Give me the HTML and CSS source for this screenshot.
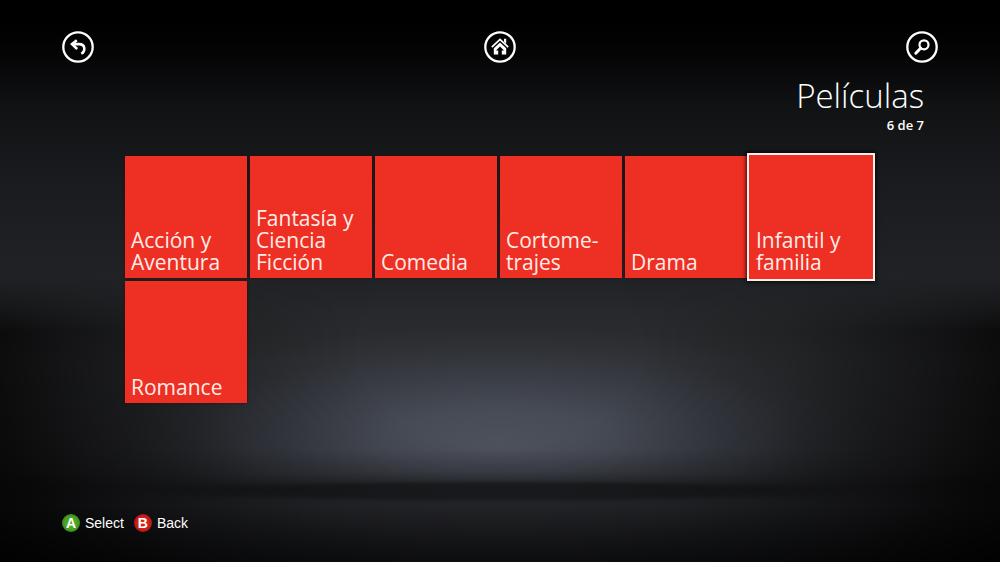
FILE: index.html
```html
<!DOCTYPE html>
<html lang="es">
<head>
<meta charset="utf-8">
<meta name="viewport" content="width=device-width, initial-scale=1">
<title>Películas</title>
<link rel="stylesheet" href="styles.css">
</head>
<body class="screen">
  <nav class="topbar">
    <button class="round" type="button" aria-label="Volver">
      <svg viewBox="0 0 32 32"><circle class="ring" cx="16" cy="16" r="14.7"/><path class="line" d="M14.8 9.3 10 13.1 15.2 18M10.6 13.1H17C23.8 13.1 23.5 20.5 19.3 22.6"/></svg>
    </button>
    <button class="round" type="button" aria-label="Inicio">
      <svg viewBox="0 0 32 32"><circle class="ring" cx="16" cy="16" r="14.7"/><path class="roof" d="M7.8 16.2 16 8.4l8.2 7.8"/><path class="fill" d="M20 7.8h2.2v5L20 10.7zM16 11.4l6.2 5.9v6.1h-4.4v-3.8h2.2L16 15.6l-4 4h2.2v3.8H9.8v-6.1z"/></svg>
    </button>
    <button class="round" type="button" aria-label="Buscar">
      <svg viewBox="0 0 32 32"><circle class="ring" cx="16" cy="16" r="14.7"/><circle class="lens" cx="18" cy="13.8" r="4.5"/><path class="handle" d="m14.6 17.2-4.8 5"/></svg>
    </button>
  </nav>
  <header class="heading">
    <h1 class="title">Películas</h1>
    <p class="count">6 de 7</p>
  </header>
  <main class="tiles">
    <button class="tile" type="button">Acción y Aventura</button>
    <button class="tile" type="button">Fantasía y Ciencia Ficción</button>
    <button class="tile" type="button">Comedia</button>
    <button class="tile" type="button">Cortome-trajes</button>
    <button class="tile" type="button">Drama</button>
    <button class="tile selected" type="button">Infantil y familia</button>
    <button class="tile" type="button">Romance</button>
  </main>
  <footer class="hints">
    <button class="hint" type="button"><span class="key green">A</span>Select</button>
    <button class="hint" type="button"><span class="key red">B</span>Back</button>
  </footer>
</body>
</html>
```

FILE: styles.css
```css
* { box-sizing: border-box; }

.screen {
  position: relative;
  isolation: isolate;
  display: flex;
  flex-direction: column;
  min-height: 100vh;
  margin: 0;
  color: #fff;
  background: #000;
  font-family: "Open Sans", "Noto Sans", sans-serif;
}

/* Back wall, floor and the light pooled between them */
.screen::before,
.screen::after {
  content: "";
  position: absolute;
  inset: 0;
  z-index: -2;
}

.screen::before {
  background:
    radial-gradient(ellipse 38% 2% at 50% 87.4%, rgba(24, 25, 28, .8) 20%, rgba(20, 21, 23, .6) 60%, transparent),
    linear-gradient(transparent 80%, rgba(32, 33, 36, .35) 84%, rgba(32, 33, 36, .9) 86.5%, rgba(38, 39, 43, .95) 90%, #111214 100%),
    radial-gradient(ellipse 38% 21% at 50% 79%, #4d515c, #474b55 30%, rgba(58, 62, 71, .85) 60%, rgba(51, 54, 61, .45) 82%, transparent),
    linear-gradient(#000 4%, #050506 10%, #111214 19%, #191b1e 32%, #202226 49%, #28292c 56%, #2d2e31 64%, #2b2c2f 100%);
}

.screen::after {
  z-index: -1;
  background: radial-gradient(ellipse 58% 72% at 50% 62%, transparent 25%, rgba(0, 0, 0, .2) 50%, rgba(0, 0, 0, .5) 72%, rgba(0, 0, 0, .75) 88%, #000 112%);
  mask-image: linear-gradient(transparent 49%, #000 59%);
}

button {
  margin: 0;
  padding: 0;
  border: 0;
  color: inherit;
  background: none;
  font: inherit;
  cursor: pointer;
}

.topbar {
  display: flex;
  justify-content: space-between;
  padding: 31px 62px 0;
}

.round { width: 32px; height: 32px; }
.round svg { display: block; fill: none; stroke: #fff; }
.ring { stroke-width: 2.3; }
.line { stroke-width: 2.6; }
.roof { stroke-width: 1.8; }
.fill { fill: #fff; stroke: none; }
.lens { stroke-width: 2.2; }
.handle { stroke-width: 3; stroke-linecap: round; }

.heading {
  padding: 11px 76px 0;
  text-align: right;
}

.title {
  margin: 0;
  font-size: 33px;
  font-weight: 300;
  line-height: 44px;
}

.count {
  margin: 0;
  font-size: 13px;
  font-weight: 600;
  line-height: 14px;
}

.tiles {
  display: grid;
  grid-template-columns: repeat(6, 1fr);
  gap: 3px;
  padding: 24px 128px 0 125px;
}

.tile {
  display: flex;
  flex-direction: column;
  justify-content: flex-end;
  aspect-ratio: 1;
  padding: 5px 6px;
  color: #ffece8;
  background: #ee3024;
  box-shadow: 0 0 2px #3a0c0b;
  font-size: 21px;
  line-height: 22px;
  text-align: left;
}

.selected {
  z-index: 1;
  margin: -3px;
  padding: 6px 7px;
  border: 2px solid #fff0ec;
  box-shadow: 0 0 4px 1px rgba(0, 0, 0, .8);
}

.hints {
  display: flex;
  gap: 10px;
  margin-top: auto;
  padding: 24px 62px 30px;
}

.hint {
  display: flex;
  align-items: center;
  gap: 5px;
  font-family: "Liberation Sans", Arial, sans-serif;
  font-size: 14px;
  line-height: 18px;
}

.key {
  width: 18px;
  height: 18px;
  border-radius: 50%;
  font-weight: 700;
  text-align: center;
}

.green { background: radial-gradient(#4da526 45%, #2b6b12); }
.red { background: radial-gradient(#d3201b 45%, #840d0b); }
```
